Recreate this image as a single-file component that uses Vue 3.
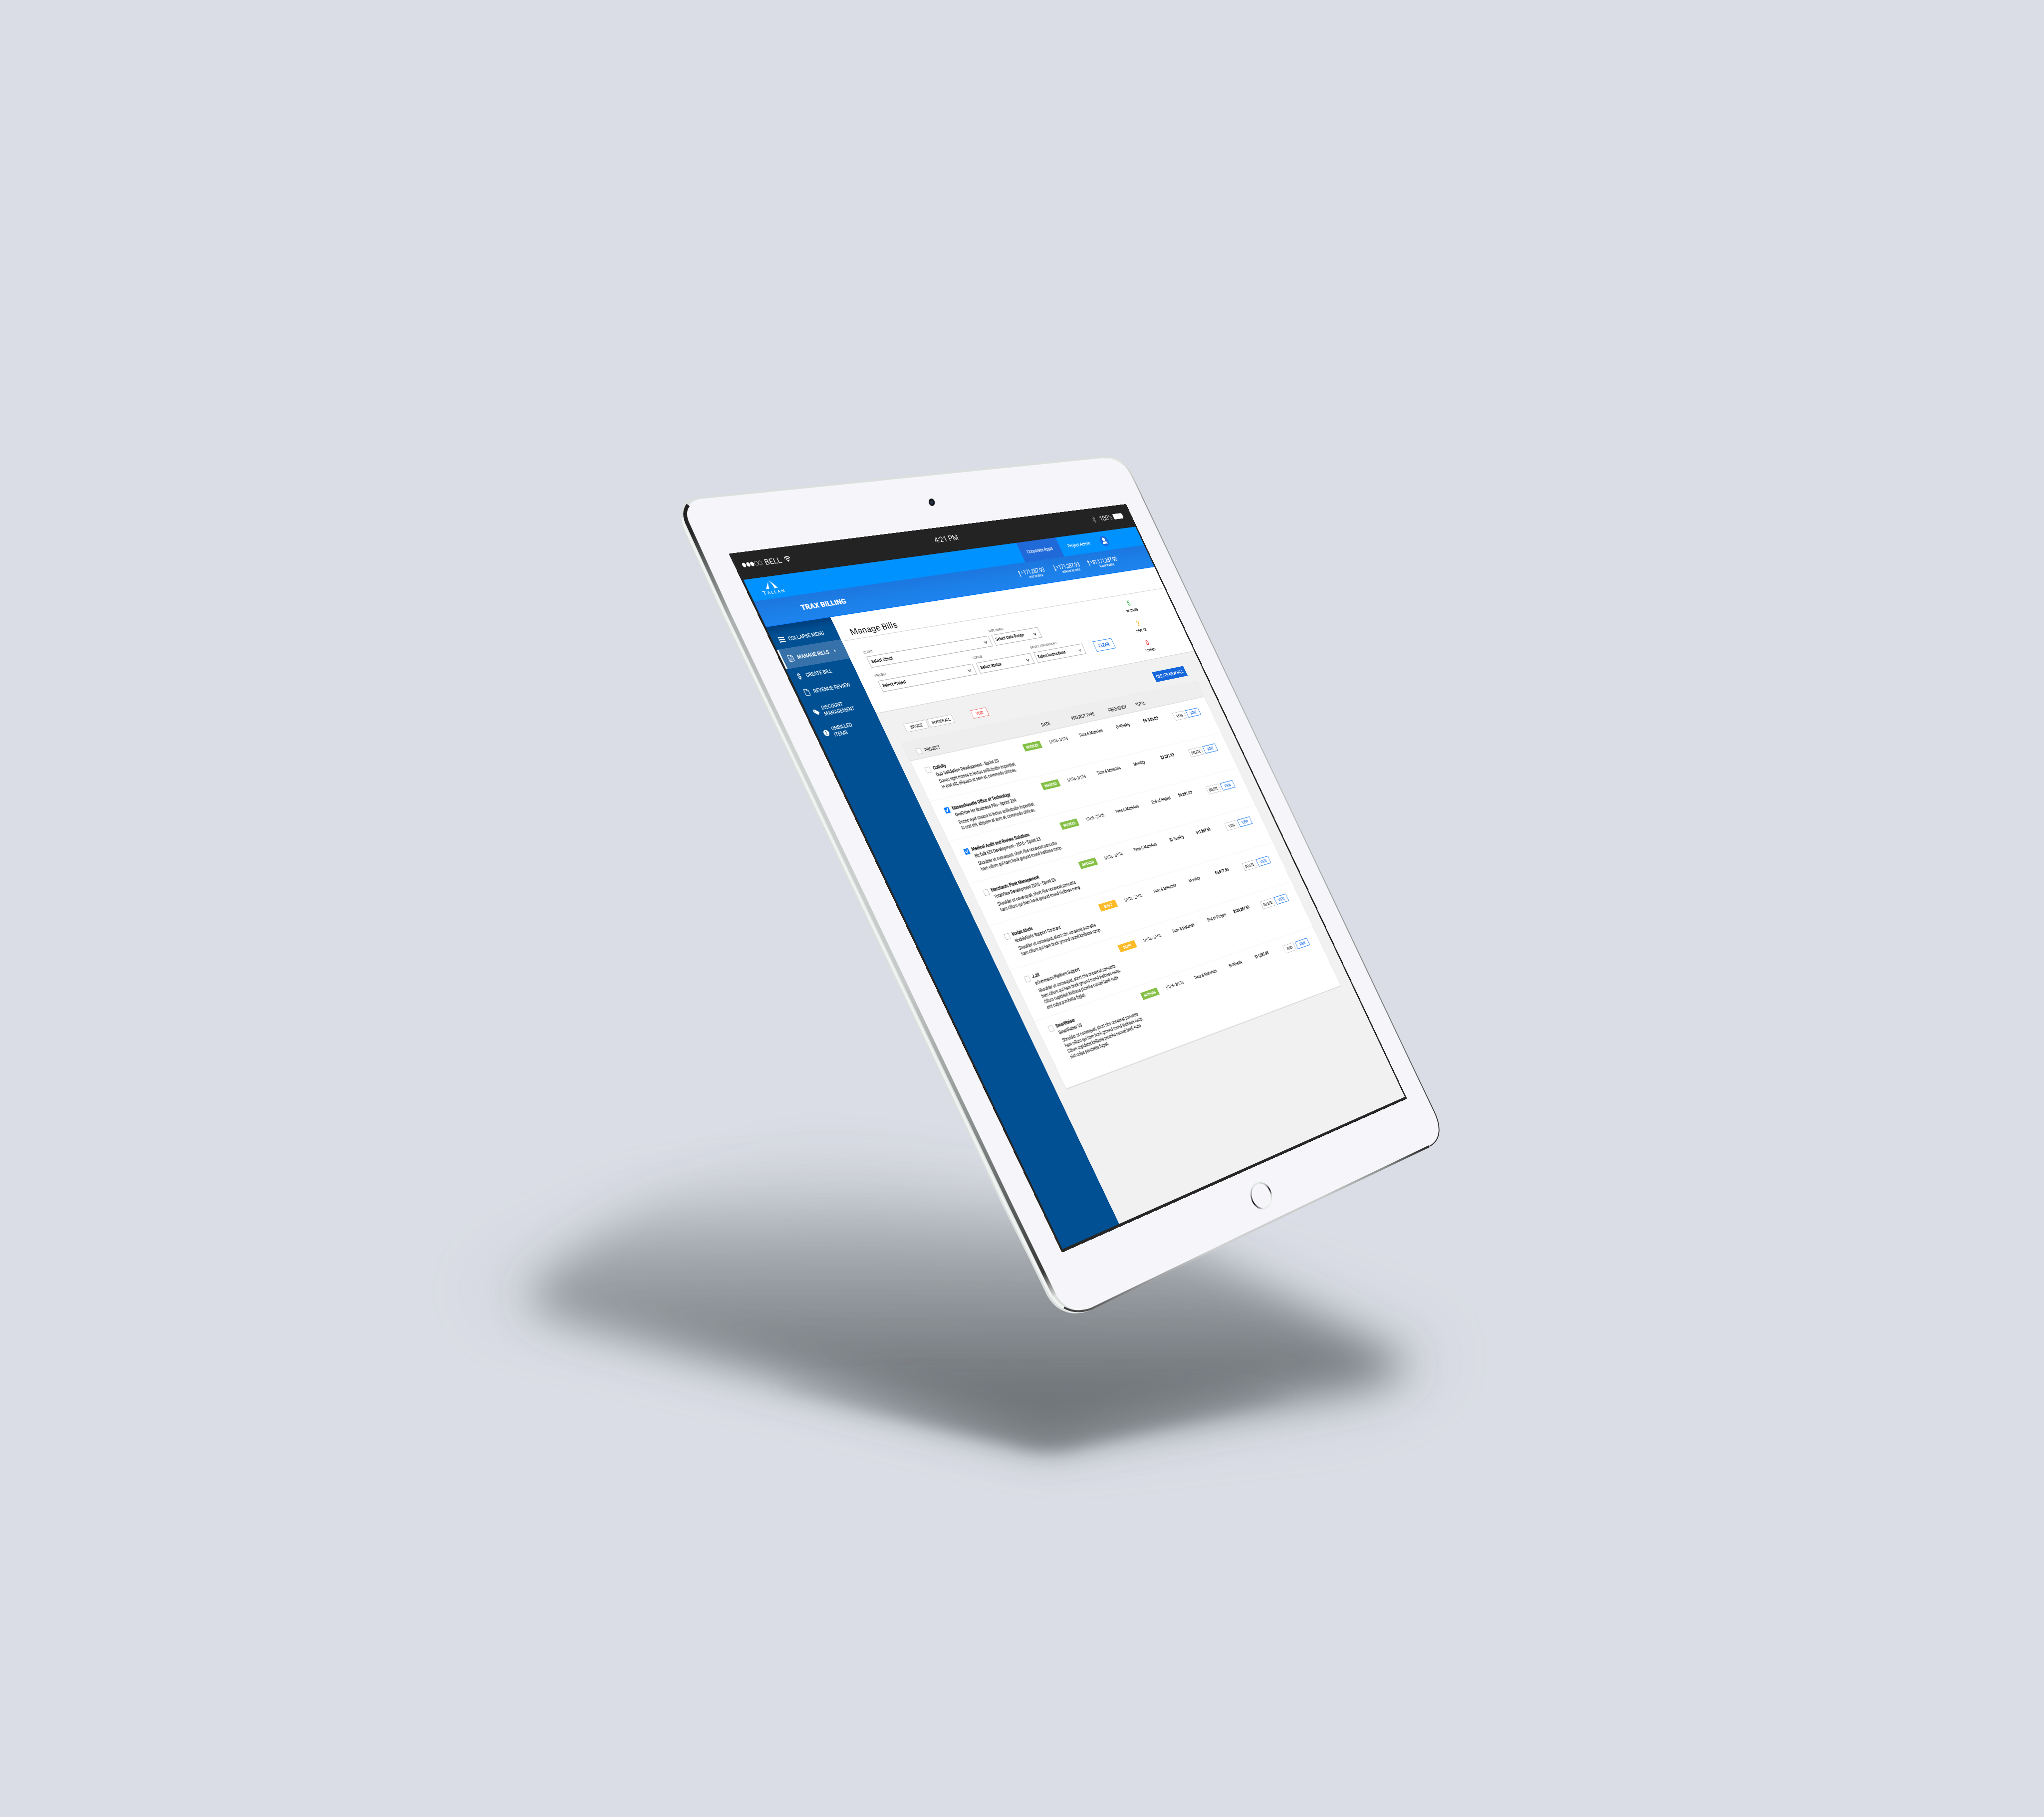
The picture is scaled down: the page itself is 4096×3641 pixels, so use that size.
<script setup>
const K = 4096 / 5400

/* Corners of the glass on the 5400 x 4800 artboard: TL, TR, BR, BL */
const W = 1536
const H = 2048
const [p0, p1, p2, p3] = [[1925.2, 1462.7], [2974.7, 1331.4], [3716.6, 2902], [2805.3, 3308.9]]

function project() {
  const sx = p0[0] - p1[0] + p2[0] - p3[0]
  const sy = p0[1] - p1[1] + p2[1] - p3[1]
  const dx1 = p1[0] - p2[0], dx2 = p3[0] - p2[0]
  const dy1 = p1[1] - p2[1], dy2 = p3[1] - p2[1]
  const den = dx1 * dy2 - dx2 * dy1
  const g = (sx * dy2 - dx2 * sy) / den
  const h = (dx1 * sy - sx * dy1) / den
  const a = (p1[0] - p0[0] + g * p1[0]) * K, b = (p3[0] - p0[0] + h * p3[0]) * K
  const d = (p1[1] - p0[1] + g * p1[1]) * K, e = (p3[1] - p0[1] + h * p3[1]) * K
  const m = [a / W, d / W, 0, g / W, b / H, e / H, 0, h / H, 0, 0, 1, 0, p0[0] * K, p0[1] * K, 0, 1]
  return `matrix3d(${m.map(n => n.toFixed(9)).join(',')})`
}
const screenTransform = project()

/* Sets a text run to an exact measure, in screen units */
const vFit = {
  mounted(el, { value }) {
    const w = el.offsetWidth
    el.style.transform = `scaleX(${value / w})`
    el.style.marginRight = `${value - w}px`
  }
}

const stats = [
  { dir: 'up', value: '171,287.93', w: 86, label: 'DAILY REVENUE', lw: 58, box: 147 },
  { dir: 'down', value: '171,287.93', w: 89, label: 'MONTHLY REVENUE', lw: 75, box: 146 },
  { dir: 'up', value: '81,171,287.93', w: 108, label: 'YEARLY REVENUE', lw: 64, box: 129 }
]
const counters = [
  { n: 5, label: 'INVOICED', w: 51, cls: 'green' },
  { n: 2, label: 'DRAFTS', w: 43, cls: 'amber' },
  { n: 0, label: 'VOIDED', w: 43, cls: 'red' }
]
const donec = [['Donec eget massa in lectus sollicitudin imperdiet.', 293], ['In erat elit, aliquam at sem et, commodo ultrices.', 285]]
const shoulder = [['Shoulder ut consequat, short ribs occaecat pancetta', 305], ['ham cillum qui ham hock ground round kielbasa rump.', 316]]
const cillum = [['Cillum cupidatat kielbasa picanha corned beef, nulla', 296], ['sint culpa porchetta fugiat.', 153]]
const rows = [
  { name: ['Cotivity', 47], sub: ['Dup Validation Development - Sprint 20', 238], desc: donec, gap: 2, h: 123, pad: 26, on: false, st: 'INVOICED', fr: ['Bi-Weekly', 59], tot: ['$5,546.03', 66], act: 'VOID' },
  { name: ['Massachusetts Office of Technology', 222], sub: ['OneDrive for Business Pilo - Sprint 234', 233], desc: donec, gap: 5, h: 120, pad: 25, on: true, st: 'INVOICED', fr: ['Monthly', 48], tot: ['$7,077.93', 60], act: 'DELETE' },
  { name: ['Medical Audit and Review Solutions', 222], sub: ['BizTalk EDI Development - 2016 - Sprint 23', 255], desc: shoulder, gap: 5, h: 128, pad: 30, on: true, st: 'INVOICED', fr: ['End of Project', 83], tot: ['$4,287.93', 61], act: 'DELETE' },
  { name: ['Merchants Fleet Management', 185], sub: ['TotalView Development 2016 - Sprint 25', 240], desc: shoulder, gap: 5, h: 127, pad: 26, on: false, st: 'INVOICED', fr: ['Bi- Weekly', 62], tot: ['$11,287.93', 64], act: 'VOID' },
  { name: ['Kodak Alaris', 79], sub: ['KodakAlaris Support Contract', 176], desc: shoulder, gap: 5, h: 134, pad: 33, on: false, st: 'DRAFT', fr: ['Monthly', 48], tot: ['$5,977.93', 61], act: 'DELETE' },
  { name: ['J.Jill', 27], sub: ['eCommerce Platform Support', 174], desc: [...shoulder, ...cillum], gap: 5, h: 155, pad: 28, on: false, st: 'DRAFT', fr: ['End of Project', 83], tot: ['$124,287.93', 73], act: 'DELETE' },
  { name: ['SmartRaiser', 75], sub: ['SmartRaiser V3', 90], desc: [...shoulder, ...cillum], gap: 5, h: 202, pad: 24, on: false, st: 'INVOICED', fr: ['Bi-Weekly', 59], tot: ['$11,287.93', 63], act: 'VOID' }
]
</script>

<template>
  <div class="stage">
    <svg class="scene" viewBox="0 0 5400 4800" preserveAspectRatio="none">
      <defs>
        <filter id="b1" x="-40%" y="-80%" width="180%" height="260%"><feGaussianBlur stdDeviation="95" /></filter>
        <filter id="b2" x="-30%" y="-60%" width="160%" height="220%"><feGaussianBlur stdDeviation="55" /></filter>
        <filter id="b3" x="-30%" y="-90%" width="160%" height="280%"><feGaussianBlur stdDeviation="20" /></filter>
        <linearGradient id="s1" gradientUnits="userSpaceOnUse" x1="0" y1="3000" x2="0" y2="3800">
          <stop offset="0" stop-color="#62686b" stop-opacity="0" />
          <stop offset=".2" stop-color="#62686b" stop-opacity=".1" />
          <stop offset=".4" stop-color="#62686b" stop-opacity=".36" />
          <stop offset=".6" stop-color="#62686b" stop-opacity=".6" />
          <stop offset=".8" stop-color="#62686b" stop-opacity=".82" />
          <stop offset="1" stop-color="#62686b" stop-opacity=".88" />
        </linearGradient>
        <linearGradient id="s3" gradientUnits="userSpaceOnUse" x1="0" y1="3620" x2="0" y2="3830">
          <stop offset="0" stop-color="#6b7174" stop-opacity="0" />
          <stop offset=".6" stop-color="#6b7174" stop-opacity=".5" />
          <stop offset="1" stop-color="#6b7174" stop-opacity=".7" />
        </linearGradient>
        <linearGradient id="side" gradientUnits="userSpaceOnUse" x1="1810" y1="1340" x2="2785" y2="3425">
          <stop offset="0" stop-color="#1f1f1f" />
          <stop offset=".03" stop-color="#262827" />
          <stop offset=".08" stop-color="#737877" />
          <stop offset=".14" stop-color="#abb0af" />
          <stop offset=".3" stop-color="#cfd4d2" />
          <stop offset=".6" stop-color="#c6cbc9" />
          <stop offset=".78" stop-color="#8a908e" />
          <stop offset=".9" stop-color="#555958" />
          <stop offset=".97" stop-color="#3a3a3a" />
          <stop offset="1" stop-color="#d9dcdb" />
        </linearGradient>
        <linearGradient id="foot" gradientUnits="userSpaceOnUse" x1="2812" y1="3454" x2="3780" y2="3026">
          <stop offset="0" stop-color="#3c3c3c" />
          <stop offset=".1" stop-color="#6b6b6b" />
          <stop offset=".22" stop-color="#9a9c9b" />
          <stop offset=".4" stop-color="#ced1d0" />
          <stop offset=".7" stop-color="#c9cdcb" />
          <stop offset=".87" stop-color="#8c8f8e" />
          <stop offset="1" stop-color="#222" />
        </linearGradient>
        <linearGradient id="edge" gradientUnits="userSpaceOnUse" x1="0" y1="1210" x2="0" y2="3026">
          <stop offset="0" stop-color="#e9ebea" />
          <stop offset=".06" stop-color="#8d9190" />
          <stop offset=".5" stop-color="#b9bdbb" />
          <stop offset=".85" stop-color="#6c706f" />
          <stop offset="1" stop-color="#222" />
        </linearGradient>
      </defs>

      <path d="M1240 3420 L1700 3200 L2300 3160 L3200 3340 L3820 3580 L3600 3700 L2780 3790 Z" fill="#868b90" opacity=".22" filter="url(#b1)" />
      <path d="M1400 3425 C1450 3350 1600 3240 1760 3150 L2150 2990 L2900 3160 L3300 3380 L3720 3600 C3700 3650 3560 3670 3440 3690 L2900 3785 L2772 3815 L2640 3785 L1500 3490 C1440 3470 1405 3450 1400 3425 Z" fill="url(#s1)" filter="url(#b2)" />
      <path d="M2060 3650 L2500 3600 L3100 3610 L3420 3690 L2880 3812 C2800 3836 2740 3836 2680 3816 L2060 3666 Z" fill="url(#s3)" filter="url(#b3)" />

      <path d="M1850 1313 L2905 1205 C2957 1201 2983 1226 2998 1266 L3012 1299 L3734 2819 L3789 2934 C3809 2974 3810 3011 3777 3029 L3293 3261 L2880 3462 C2845 3476 2795 3475 2765 3420 L2719 3325 L2646 3180 L1904 1620 L1809 1410 C1785 1358 1800 1316 1850 1313 Z" fill="#dbdfdd" />
      <path d="M1804 1368 C1806 1388 1814 1402 1820 1416 L1912 1617 L2655 3180 L2771 3412 C2795 3455 2825 3466 2850 3464" fill="none" stroke="#f0f3f1" stroke-width="7" />
      <path d="M1852 1318 L2905 1211 C2950 1207 2976 1226 2993 1267 L3010 1300 L3732 2820 L3787 2935 C3806 2973 3808 3008 3776 3026 L2880 3455 C2840 3470 2812 3455 2788 3417 L2673 3180 L1930 1620 L1826 1390 C1805 1345 1818 1322 1852 1318 Z" fill="#f6f6fa" />
      <path d="M1818 1334 C1806 1350 1808 1368 1819 1389 L1923 1617 L2668 3180 L2776 3402 L2786 3422" fill="none" stroke="url(#side)" stroke-width="10" />
      <path d="M2811 3454 C2832 3466 2855 3467 2882 3458 L3293 3259 L3776 3028" fill="none" stroke="url(#foot)" stroke-width="5.500" />
      <path d="M2920 1210 C2957 1209 2978 1226 2995.500 1266 L3011 1299 L3733 2819.500 L3788 2934.500 C3807 2973 3809 3010 3777 3028" fill="none" stroke="url(#edge)" stroke-width="2.400" />

      <ellipse cx="2461.600" cy="1326.800" rx="8" ry="10" transform="rotate(-18 2461.600 1326.800)" fill="#17181b" />
      <ellipse cx="2461" cy="1327.500" rx="3.500" ry="4.500" fill="#27344f" />
    </svg>

    <div class="home"></div>

    <div class="screen" :style="{ transform: screenTransform }">
      <div class="status">
        <div class="carrier">
          <i class="dot on"></i><i class="dot on"></i><i class="dot on"></i><i class="dot"></i><i class="dot"></i>
          <span v-fit="56" class="s20 bell">BELL</span>
          <svg class="wifi" viewBox="0 0 22 18"><g fill="none" stroke="#fff" stroke-width="2.600"><path d="M1.500 6.500 A13.500 13.500 0 0 1 20.500 6.500" /><path d="M5 10.800 A8.500 8.500 0 0 1 17 10.800" /></g><path d="M11 18 L7 13.500 A6 6 0 0 1 15 13.500 Z" fill="#fff" /></svg>
        </div>
        <span v-fit="91" class="s20">4:21 PM</span>
        <div class="power">
          <svg class="bt" viewBox="0 0 12 20"><path d="M1 5 L11 14.500 L6 19 V1 L11 5.500 L1 15" fill="none" stroke="#8a8a8a" stroke-width="1.400" /></svg>
          <span v-fit="54" class="s20">100%</span>
          <i class="battery"></i>
        </div>
      </div>

      <div class="topbar">
        <div class="logo">
          <svg viewBox="0 0 44 26"><path d="M23 0 C16 8 8 17 1 25 C5 23.500 9 23.500 13 25 C14 17 17 7 23 0 Z M23 0 C30 5 38 15 43 25 C39 24 35 24 31 26 C32 17 28 6 23 0 Z" fill="#fff" /></svg>
          <span v-fit="75" class="logotype"><b>T</b>ALLAN</span>
        </div>
        <div class="apps"><span v-fit="107" class="s15">Corporate Apps</span></div>
        <span v-fit="96" class="s15 admin">Project Admin</span>
        <div class="user"><svg viewBox="0 0 30 30"><circle cx="15" cy="10" r="5.200" fill="#fff" /><path d="M6 23 C6 17 10 15.500 15 17 C20 15.500 24 17 24 23 Z" fill="#fff" /></svg></div>
      </div>

      <div class="subbar">
        <span v-fit="156" class="brand">TRAX BILLING</span>
        <div class="stats">
          <div v-for="(s, i) in stats" :key="i" class="stat" :style="{ width: s.box + 'px' }">
            <svg class="arrow" :class="s.dir" viewBox="0 0 8 20"><path d="M4 0 L8 6 H5.200 V20 H2.800 V6 H0 Z" fill="#fff" /></svg>
            <span class="cur">$</span>
            <div class="figure">
              <span v-fit="s.w" class="num">{{ s.value }}</span>
              <span v-fit="s.lw" class="cap">{{ s.label }}</span>
            </div>
          </div>
        </div>
      </div>

      <div class="body">
        <nav class="side">
          <div class="item collapse"><span class="ico"><i class="burger"></i></span><span v-fit="122">COLLAPSE MENU</span></div>
          <div class="item active">
            <span class="ico"><svg width="17" height="20" viewBox="0 0 17 20" fill="none" stroke="#fff" stroke-width="1.600"><path d="M1 1 H11 L16 6 V19 H1 Z M10.500 1 V6.500 H16 M4 9.500 H13 M4 12.500 H13 M4 15.500 H13" /></svg></span>
            <span v-fit="109">MANAGE BILLS</span><svg class="caret" width="6" height="10" viewBox="0 0 6 10"><path d="M1 0 L5.500 5 L1 10 Z" fill="#fff" /></svg>
          </div>
          <div class="item create"><span class="ico dollar">$</span><span v-fit="89">CREATE BILL</span></div>
          <div class="item revenue"><span class="ico"><svg width="16" height="20" viewBox="0 0 16 20" fill="none" stroke="#fff" stroke-width="1.600"><path d="M1 1 H10 L15 6 V19 H1 Z M9.500 1 V6.500 H15" /></svg></span><span v-fit="127">REVENUE REVIEW</span></div>
          <div class="item discount">
            <span class="ico"><svg width="20" height="18" viewBox="0 0 20 18"><path fill-rule="evenodd" d="M1 1.500 L8.500 1 L19.500 10.500 L12.500 17.500 L1.500 8.500 Z M4.500 3.200 a1.600 1.600 0 1 0 .1 0 Z" fill="#fff" /></svg></span>
            <span class="two"><span v-fit="73">DISCOUNT</span><span v-fit="104">MANAGEMENT</span></span>
          </div>
          <div class="item unbilled">
            <span class="ico"><svg width="18" height="18" viewBox="0 0 18 18"><circle cx="9" cy="9" r="9" fill="#fff" /><path d="M7.600 3.500 H10.400 L10 10.500 H8 Z M7.700 12 H10.300 V14.500 H7.700 Z" fill="#005093" /></svg></span>
            <span class="two"><span v-fit="71">UNBILLED</span><span v-fit="45">ITEMS</span></span>
          </div>
        </nav>

        <main class="main">
          <div class="title"><span v-fit="169">Manage Bills</span></div>

          <div class="filters">
            <div class="fields">
              <div class="frow first">
                <div class="field w459"><span v-fit="33" class="lab">CLIENT</span><div class="select"><span v-fit="78">Select Client</span><svg class="chev" viewBox="0 0 12 10"><path d="M1.500 1.500 L6 8 L10.500 1.500" /></svg></div></div>
                <div class="field w187"><span v-fit="57" class="lab">DATE RANGE</span><div class="select"><span v-fit="113">Select Date Range</span><svg class="chev" viewBox="0 0 12 10"><path d="M1.500 1.500 L6 8 L10.500 1.500" /></svg></div></div>
              </div>
              <div class="frow second">
                <div class="field w353"><span v-fit="42" class="lab">PROJECT</span><div class="select"><span v-fit="84">Select Project</span><svg class="chev" viewBox="0 0 12 10"><path d="M1.500 1.500 L6 8 L10.500 1.500" /></svg></div></div>
                <div class="field w217"><span v-fit="36" class="lab">STATUS</span><div class="select"><span v-fit="82">Select Status</span><svg class="chev" viewBox="0 0 12 10"><path d="M1.500 1.500 L6 8 L10.500 1.500" /></svg></div></div>
                <div class="field w203"><span v-fit="107" class="lab">INVOICE INSTRUCTIONS</span><div class="select"><span v-fit="114">Select Instructions</span><svg class="chev" viewBox="0 0 12 10"><path d="M1.500 1.500 L6 8 L10.500 1.500" /></svg></div></div>
                <div class="clear"><span v-fit="45">CLEAR</span></div>
              </div>
            </div>
            <div class="counters">
              <div v-for="c in counters" :key="c.label" class="counter">
                <span class="big" :class="c.cls">{{ c.n }}</span>
                <span v-fit="c.w" class="clab">{{ c.label }}</span>
              </div>
            </div>
          </div>

          <div class="tools">
            <div class="btn b81"><span v-fit="44">INVOICE</span></div>
            <div class="btn b90"><span v-fit="68">INVOICE ALL</span></div>
            <div class="btn void"><span v-fit="27">VOID</span></div>
            <div class="new"><span v-fit="124">CREATE NEW BILL</span></div>
          </div>

          <div class="card">
            <div class="line head">
              <i class="cb"></i>
              <span v-fit="56">PROJECT</span><span></span>
              <span v-fit="35">DATE</span><span v-fit="96">PROJECT TYPE</span><span v-fit="79">FREQUENCY</span><span v-fit="41">TOTAL</span>
            </div>
            <div v-for="(r, i) in rows" :key="i" class="line row" :style="{ height: r.h + 'px', paddingTop: r.pad + 'px' }">
              <i class="cb" :class="{ on: r.on }"><svg v-if="r.on" viewBox="0 0 16 16"><path d="M2.500 7.500 L7 12.500 L13.500 3" fill="none" stroke="#fff" stroke-width="3" /></svg></i>
              <div class="proj">
                <span v-fit="r.name[1]" class="name">{{ r.name[0] }}</span>
                <span v-fit="r.sub[1]" class="sub">{{ r.sub[0] }}</span>
                <div class="desc" :style="{ marginTop: r.gap + 'px' }"><span v-for="(d, j) in r.desc" :key="j" v-fit="d[1]">{{ d[0] }}</span></div>
              </div>
              <div class="badge" :class="{ draft: r.st === 'DRAFT' }"><span v-fit="r.st === 'DRAFT' ? 33 : 48">{{ r.st }}</span></div>
              <span v-fit="75" class="cell">1/1/16 - 2/1/16</span>
              <span v-fit="100" class="cell">Time &amp; Materials</span>
              <span v-fit="r.fr[1]" class="cell">{{ r.fr[0] }}</span>
              <span v-fit="r.tot[1]" class="cell total">{{ r.tot[0] }}</span>
              <div class="acts">
                <div class="btn" :class="r.act === 'VOID' ? 'b51' : 'b57'"><span v-fit="r.act === 'VOID' ? 26 : 40">{{ r.act }}</span></div>
                <div class="btn view"><span v-fit="28">VIEW</span></div>
              </div>
            </div>
          </div>
        </main>
      </div>
    </div>
  </div>
</template>

<style>
html, body { margin: 0; background: #dadde5; }
</style>

<style scoped>
* { box-sizing: border-box; }
.stage { position: relative; width: 4096px; height: 3641px; overflow: hidden; background: #dadde5; font-family: Roboto, "Open Sans", sans-serif; }
.scene { display: block; width: 4096px; height: 3641px; }
.home { position: absolute; left: 2506px; top: 2368px; width: 43px; height: 56px; border-radius: 50%; transform: rotate(-14deg);
  background: conic-gradient(#e3e9e5 0deg, #b9bfbc 35deg, #111 64deg, #333 74deg, #cdd3d0 100deg, #eef2ef 130deg, #e6ebe8 185deg, #8c9290 205deg, #111 238deg, #2b2d2c 252deg, #8a908e 285deg, #dce2de 330deg, #e3e9e5 360deg);
  -webkit-mask: radial-gradient(closest-side, transparent 85%, #000 89%); mask: radial-gradient(closest-side, transparent 85%, #000 89%); }

.screen { position: absolute; left: 0; top: 0; width: 1536px; height: 2048px; padding: 0 6px 8px 7px; transform-origin: 0 0; background: #272727; border-radius: 4px; display: flex; flex-direction: column; color: #1c1c1c; white-space: nowrap; -webkit-text-stroke: .3px; }
.screen span { display: inline-block; transform-origin: 0 50%; flex: none; }
.screen svg { display: block; flex: none; }

.status { height: 77px; flex: none; display: flex; align-items: center; justify-content: space-between; padding: 0 32px 4px 18px; color: #fff; background: #232323; }
.s20 { font-size: 22px; line-height: 24px; font-weight: 400; -webkit-text-stroke: 0; }
.carrier { display: flex; align-items: center; width: 316px; }
.dot { width: 12px; height: 13px; margin-right: 1.500px; border-radius: 50%; border: 1.200px solid #fff; }
.dot.on { background: #fff; }
.bell { margin-left: 7px; }
.wifi { width: 22px; height: 18px; margin: -4px 0 0 12px; }
.power { display: flex; align-items: center; justify-content: flex-end; width: 324px; }
.bt { width: 13px; height: 22px; margin-right: 19px; }
.battery { width: 42px; height: 18px; margin: -1px 0 0 7px; background: #fff; border-radius: 3px 6px 6px 3px; }

.topbar { height: 63px; flex: none; display: flex; background: #0092ff; color: #fff; align-items: center; }
.logo { margin: 0 auto 0 39px; width: 75px; display: flex; flex-direction: column; align-items: flex-start; padding-top: 0; }
.logo svg { width: 42px; height: 25px; margin-left: 16px; }
.logotype { margin-left: 2px; font-family: Lato, sans-serif; font-size: 11px; line-height: 16px; letter-spacing: 2.500px; }
.logotype b { font-size: 14px; font-weight: 400; }
.apps { width: 164px; height: 63px; display: flex; align-items: center; padding-left: 25px; background: #2069d9; }
.s15 { font-size: 15px; line-height: 20px; }
.admin { margin-left: 34px; }
.user { width: 34px; height: 34px; margin: 0 143px 0 46px; border-radius: 50%; background: #1a6ae0; }
.user svg { width: 34px; height: 34px; }

.subbar { height: 75px; flex: none; display: flex; align-items: flex-start; justify-content: space-between; padding: 24px 142px 0 140px; color: #fff; background: linear-gradient(#1d76df, #1c80e9 60%, #1e83ee); border-bottom: 2px solid #0a7cf6; }
.brand { font-size: 20px; line-height: 24px; font-weight: 900; }
.stats { display: flex; }
.stat { display: flex; align-items: flex-start; }
.arrow { width: 8px; height: 22px; margin-top: -3px; }
.arrow.down { transform: rotate(180deg); }
.cur { width: 8px; margin: 0 0 0 5px; font-size: 8px; line-height: 12px; }
.figure { display: flex; flex-direction: column; align-items: center; margin-top: -3px; }
.num { font-size: 19px; line-height: 20px; font-weight: 400; }
.cap { font-size: 9px; line-height: 12px; }

.body { flex: 1; display: flex; min-height: 0; }
.side { width: 220px; flex: none; background: linear-gradient(#003c7a, #004f92 24px, #005093 60px); color: #fff; font-size: 15px; }
.item { display: flex; align-items: center; }
.ico { width: 20px; margin: 0 12px 0 21px; display: flex !important; justify-content: center; }
.collapse { height: 66px; padding-top: 15px; }
.burger { width: 20px; height: 15px; border-top: 3px solid #fff; border-bottom: 3px solid #fff; background: linear-gradient(transparent 3px, #fff 3px, #fff 6px, transparent 6px); }
.active { height: 57px; background: #3771a9; font-weight: 500; box-shadow: inset 5px 0 0 #fff; }
.caret { margin-left: 18px; }
.create { height: 50px; }
.dollar { font-size: 21px; line-height: 24px; font-weight: 500; }
.revenue { height: 44px; }
.discount { height: 72px; }
.unbilled { height: 50px; }
.two { display: flex !important; flex-direction: column; align-items: flex-start; line-height: 18.500px; }

.main { flex: 1; background: #f1f1f1; }
.title { height: 73px; padding: 37px 0 0 42px; border-bottom: 2px solid #dedede; background: #fff; font-size: 25px; line-height: 28px; -webkit-text-stroke: 0; }
.filters { height: 214px; display: flex; background: #fff; padding-left: 56px; }
.fields { width: 1016px; padding-top: 35px; }
.frow { display: flex; align-items: flex-end; }
.first { height: 52px; gap: 12px; }
.second { height: 55px; margin-top: 18px; gap: 13.500px; }
.field { display: flex; flex-direction: column; height: 100%; padding-top: 1px; }
.lab { height: 10px; margin-left: -2px; align-self: flex-start; font-size: 9.500px; line-height: 10px; color: #777; }
.select { height: 34px; margin-top: auto; padding: 3px 13px 0 7px; border: 2px solid #c0c0c0; display: flex; align-items: flex-start; justify-content: space-between; font-size: 14px; line-height: 24px; font-weight: 700; color: #1a1a1a; background: #fff; -webkit-text-stroke: 0; }
.select span { margin-top: -1px; }
.chev { width: 12px; height: 10px; margin-top: 10px; fill: none; stroke: #444; stroke-width: 2.200; }
.w459 .chev, .w353 .chev { margin-top: 9px; }
.w187 .select span { margin-top: -2px; }
.w459 { width: 459px; } .w187 { width: 187px; } .w353 { width: 353px; } .w217 { width: 217px; } .w203 { width: 203px; }
.clear { width: 82px; height: 34px; margin-left: 31px; display: flex; align-items: center; justify-content: center; border: 2px solid #5aa5f5; color: #1b6fe0; font-size: 15px; font-weight: 500; }
.counters { width: 100px; padding-top: 17px; display: flex; flex-direction: column; gap: 23.500px; }
.counter { display: flex; flex-direction: column; align-items: center; gap: 5px; height: 43px; }
.big { font-size: 22px; line-height: 24px; font-weight: 400; }
.big.green { color: #35ad45; } .big.amber { color: #fbb51b; } .big.red { color: #ee3333; }
.clab { font-size: 11px; line-height: 14px; color: #111; }

.tools { height: 96px; display: flex; align-items: center; padding: 17px 77px 0 73px; border-top: 2px solid #dcdcdc; }
.btn { height: 25px; padding-top: 1px; display: flex; align-items: center; justify-content: center; border: 1.500px solid #b8b8b8; background: #fff; font-size: 12px; line-height: 14px; color: #1c1c1c; box-shadow: 0 0 1px #c8c8c8; }
.b81 { width: 81px; margin-right: 6px; } .b90 { width: 90px; margin-right: 73px; }
.void { width: 60px; border-color: #f2605c; color: #ee3a36; box-shadow: 0 0 1px #f2807c; }
.new { width: 143px; height: 33px; margin-left: auto; display: flex; align-items: center; justify-content: center; background: #1466da; color: #fff; font-size: 15px; }

.card { width: 1215px; margin-left: 38px; background: #fff; box-shadow: 0 2px 2px #d2d2d2, 0 0 2px #e2e2e2; }
.line { display: grid; grid-template-columns: 27px 350px 102px 124px 157px 119px 1fr; padding-left: 36px; align-items: start; justify-items: start; }
.row { grid-template-columns: 27px 350px 102px 124px 157px 119px 1fr auto; padding-right: 48px; border-bottom: 2px solid #f7f7f7; }
.row:last-child { border-bottom: 0; }
.head { height: 55px; padding-top: 22px; background: #eeeeee; border-bottom: 2px solid #dedede; font-size: 14px; line-height: 20px; color: #2c2c2c; }
.head span { margin-left: 1.500px; margin-top: .5px; }
.cb { width: 17px; height: 17px; border: 1.500px solid #b4b4b4; background: #fff; box-shadow: 0 0 1px #ccc; }
.cb.on { border-color: #0a7bff; background: #0a7bff; }
.cb svg { width: 14px; height: 14px; }
.head .cb { margin-top: 2px; }
.proj { display: flex; flex-direction: column; align-items: flex-start; margin: -4px 0 0 1px; font-size: 14px; line-height: 20px; }
.name { font-weight: 700; }
.desc { display: flex; flex-direction: column; align-items: flex-start; line-height: 17px; color: #2e2e2e; }
.badge { width: 69px; height: 22px; margin-top: -4px; display: flex; align-items: center; justify-content: center; background: #85c046; color: #fff; font-size: 11px; line-height: 12px; font-weight: 700; padding-top: 2px; }
.badge.draft { background: #fdbb29; }
.cell { margin: -4px 0 0 1px; font-size: 13.500px; line-height: 20px; color: #222; }
.total { font-weight: 700; color: #1a1a1a; }
.acts { display: flex; gap: 8px; margin-top: 2px; }
.b51 { width: 51px; } .b57 { width: 57px; }
.acts .view { width: 59px; border: 2px solid #4c94f0; color: #2a78e4; box-shadow: none; }
</style>
